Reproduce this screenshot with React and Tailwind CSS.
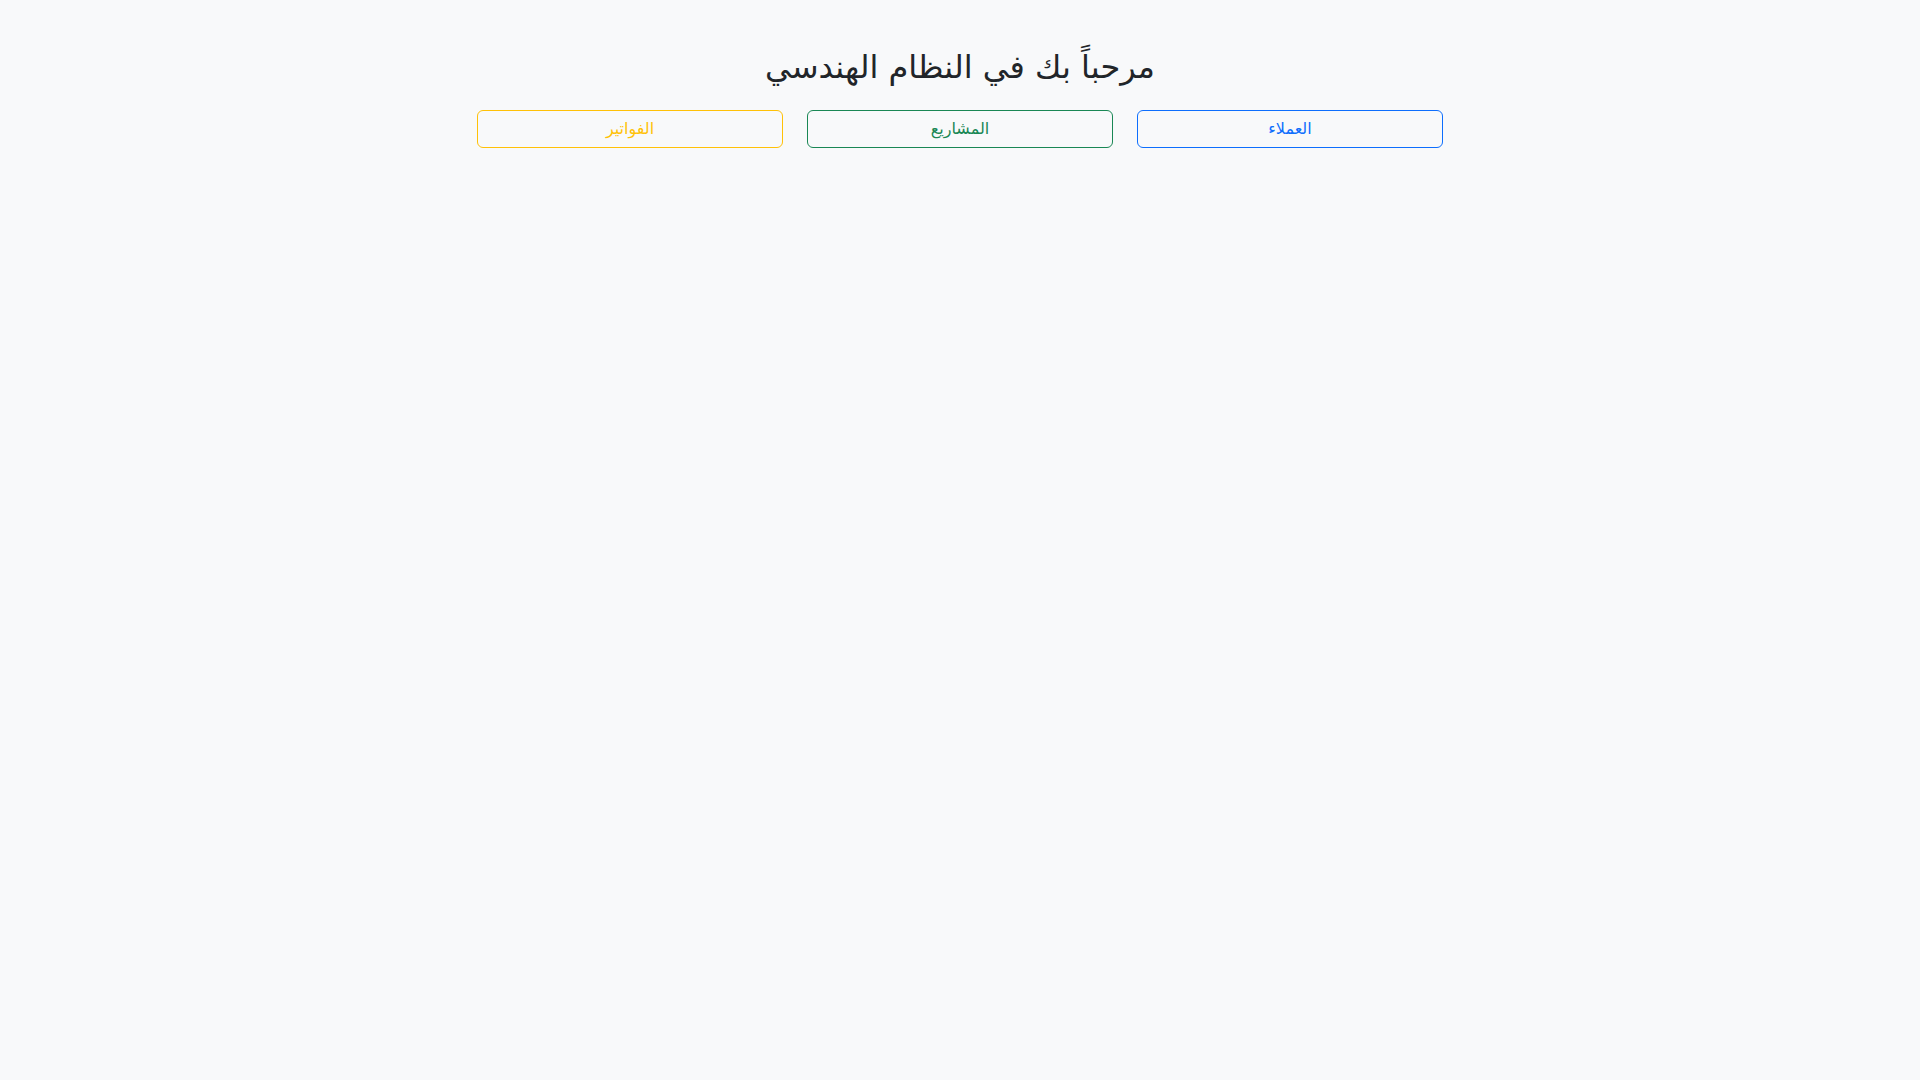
export default function App() {
  const links = [
    { label: "العملاء", cls: "border-[#0d6efd] text-[#0d6efd]" },
    { label: "المشاريع", cls: "border-[#198754] text-[#198754]" },
    { label: "الفواتير", cls: "border-[#ffc107] text-[#ffc107]" },
  ];

  return (
    <div
      dir="rtl"
      className="min-h-screen bg-[#f8f9fa] text-[#212529] pt-12"
      style={{ fontFamily: '"DejaVu Sans", "Noto Sans", "Liberation Sans", sans-serif' }}
    >
      <div className="mx-auto w-[990px]">
        <h2 className="text-center text-[32px] leading-[1.2] font-medium mb-6">
          مرحباً بك في النظام الهندسي
        </h2>
        {/* MAIN LINKS */}
        <div className="grid grid-cols-3">
          {links.map((l) => (
            <div key={l.label} className="px-3">
              <a
                href="#"
                className={`block w-full text-center border rounded-[6px] px-3 py-[6px] text-base leading-6 ${l.cls}`}
              >
                {l.label}
              </a>
            </div>
          ))}
        </div>
      </div>
    </div>
  );
}
